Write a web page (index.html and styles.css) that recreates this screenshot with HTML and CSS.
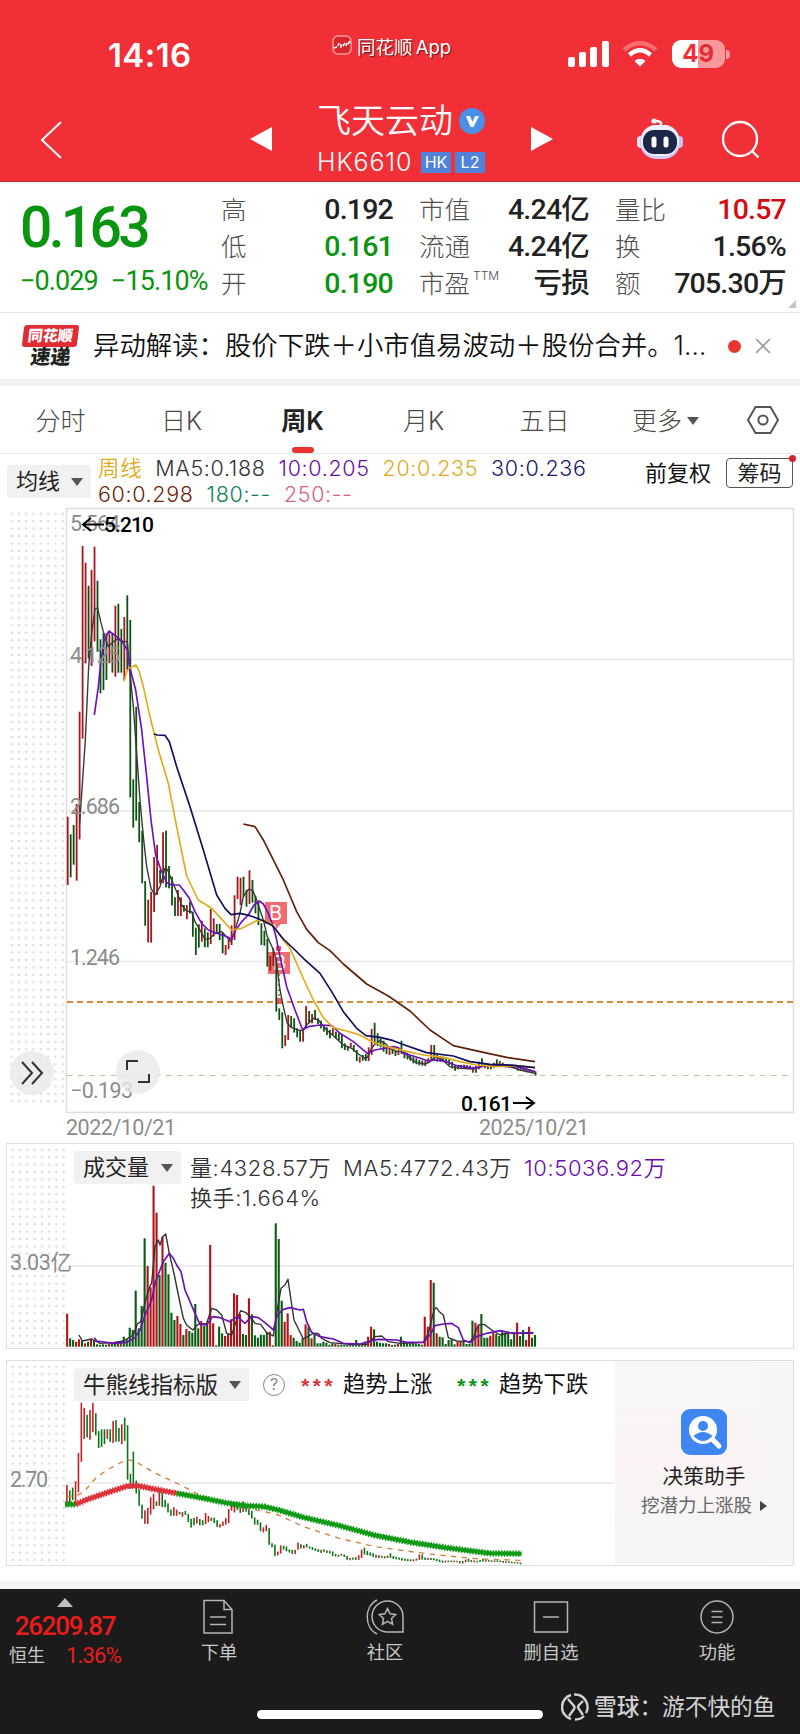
FILE: index.html
```html
<!DOCTYPE html>
<html lang="zh-CN">
<head>
    <meta charset="UTF-8">
    <meta name="viewport" content="width=device-width, initial-scale=1.0">
    <title>飞天云动 HK6610</title>
    <link rel="stylesheet" href="styles.css">
</head>
<body>
    <header class="top">
        <div class="status">
            <div class="time">14:16</div>
            <div class="app-name">
                <svg width="20" height="20" viewBox="0 0 20 20"><rect x="1" y="1" width="18" height="18" rx="5" fill="#d9262c" stroke="#f7989b" stroke-width="1.6"/><path d="M2 13l3-1M6 11l1-3M9 9v4M11 11l2-3M14 11l1-3M16 9l2-3" stroke="#fff" stroke-width="1.6" fill="none"/></svg>
                <span>同花顺 App</span>
            </div>
            <div class="signals">
                <svg width="42" height="28" viewBox="0 0 42 28" fill="#fff"><rect x="0" y="17" width="7" height="10" rx="2"/><rect x="11" y="12" width="7" height="15" rx="2"/><rect x="22" y="7" width="7" height="20" rx="2"/><rect x="34" y="1" width="7" height="26" rx="2"/></svg>
                <svg class="wifi" width="36" height="28" viewBox="0 0 36 28" fill="none" stroke="#fff" stroke-width="4.5"><path d="M2 10Q18-4 34 10" opacity=".3"/><path d="M7.500 15Q18 5.500 28.500 15"/><path d="M18 26.500L12.500 21Q18 16.500 23.500 21Z" fill="#fff" stroke="none"/></svg>
                <div class="battery"><span>4</span><span class="dim">9</span></div>
            </div>
        </div>
        <div class="titlebar">
            <svg class="back" width="24" height="40" viewBox="0 0 24 40" fill="none" stroke="#fff" stroke-width="2"><path d="M22 2L3 20l19 18"/></svg>
            <svg class="prev" width="22" height="24" viewBox="0 0 22 24" fill="#fff"><path d="M22 0v24L0 12z"/></svg>
            <div class="stock">
                <div class="stock-name">飞天云动<svg width="26" height="26" viewBox="0 0 26 26"><circle cx="13" cy="13" r="13" fill="#4a8fe8"/><path d="M7 8h4l2.500 6L16 8h4l-5.500 11h-3z" fill="#fff"/></svg></div>
                <div class="stock-code"><span>HK6610</span><b>HK</b><b>L2</b></div>
            </div>
            <svg class="next" width="22" height="24" viewBox="0 0 22 24" fill="#fff"><path d="M0 0v24l22-12z"/></svg>
            <svg class="robot" width="46" height="42" viewBox="0 0 46 42"><path d="M24 8V5q-1-2-5-2" stroke="#fff" stroke-width="2.500" fill="none"/><circle cx="17" cy="3" r="2.600" fill="#fff"/><rect x="0" y="18" width="8" height="12" rx="4" fill="#e4e2fb"/><rect x="38" y="18" width="8" height="12" rx="4" fill="#c4c2f8"/><rect x="3" y="7" width="40" height="34" rx="16.500" fill="#d0cdfa"/><rect x="4" y="7" width="38" height="31" rx="15" fill="#efeefe"/><rect x="6" y="12" width="34" height="24" rx="11" fill="#1c2748"/><rect x="14.500" y="18.500" width="5" height="11" rx="2.500" fill="#fff"/><rect x="26.500" y="18.500" width="5" height="11" rx="2.500" fill="#fff"/></svg>
            <svg class="search" width="40" height="40" viewBox="0 0 40 40" fill="none" stroke="#fff" stroke-width="2.300"><circle cx="19" cy="19" r="17"/><path d="M31 31l6.500 6.500"/></svg>
        </div>
    </header>

    <section class="quote">
        <div class="price">
            <div class="last">0.163</div>
            <div class="change"><span>−0.029</span><span>−15.10%</span></div>
        </div>
        <dl class="facts">
            <div><dt>高</dt><dd>0.192</dd></div>
            <div><dt>低</dt><dd class="down">0.161</dd></div>
            <div><dt>开</dt><dd class="down">0.190</dd></div>
        </dl>
        <dl class="facts">
            <div><dt>市值</dt><dd>4.24<i>亿</i></dd></div>
            <div><dt>流通</dt><dd>4.24<i>亿</i></dd></div>
            <div><dt>市盈<sup>TTM</sup></dt><dd><i>亏损</i></dd></div>
        </dl>
        <dl class="facts">
            <div><dt>量比</dt><dd class="up">10.57</dd></div>
            <div><dt>换</dt><dd>1.56%</dd></div>
            <div><dt>额</dt><dd>705.30<i>万</i></dd></div>
        </dl>
    </section>

    <section class="news">
        <div class="news-logo"><span>同花顺</span><em>速递</em></div>
        <p>异动解读：股价下跌＋小市值易波动＋股份合并。1…</p>
        <i class="dot"></i>
        <svg width="16" height="16" viewBox="0 0 16 16" stroke="#999" stroke-width="1.600"><path d="M1 1l14 14M15 1L1 15"/></svg>
    </section>

    <nav class="tabs">
        <a>分时</a>
        <a>日K</a>
        <a class="active">周K</a>
        <a>月K</a>
        <a>五日</a>
        <a>更多<i class="caret"></i></a>
        <svg width="32" height="30" viewBox="0 0 32 30" fill="none" stroke="#555" stroke-width="2"><path d="M8.500 2h15L31 15l-7.500 13h-15L1 15z"/><circle cx="16" cy="15" r="4.600"/></svg>
    </nav>

    <section class="averages">
        <button class="pill">均线<i class="caret"></i></button>
        <div class="legend">
            <div><span class="ma20">周线</span><span class="ma5">MA5:0.188</span><span class="ma10">10:0.205</span><span class="ma20">20:0.235</span><span class="ma30">30:0.236</span></div>
            <div><span class="ma60">60:0.298</span><span class="ma180">180:--</span><span class="ma250">250:--</span></div>
        </div>
        <span class="adjust">前复权</span>
        <button class="chips">筹码</button>
    </section>

    <section class="kline">
        <div class="dots"></div>
        <svg class="plot" width="800" height="640" viewBox="0 504 800 640">
            <rect x="66.500" y="508.500" width="727" height="604" class="frame"/>
            <path class="grid" d="M67 659.500H793M67 811H793M67 961.500H793"/>
            <path d="M67 1002H793" stroke="#d88c35" stroke-width="1.800" stroke-dasharray="6 4"/>
            <path d="M67 1075.500H793" stroke="#c4bfa6" stroke-width="1.200" stroke-dasharray="5.500 5.500"/>
            <path d="M265 902h22v22h-6l-5 5-1-5h-10zM268 952h22v22h-22z" fill="#f16c70"/>
            <g class="mark"><text x="269" y="920">B</text><text x="273" y="970">B</text></g>
            <path d="M279 974v26" stroke="#f16c70" stroke-width="2" stroke-dasharray="2 3"/>
            <path d="M276 998h6v6h-6zM276 946h5v5h-5z" fill="#f05a50"/>
            <g id="candles"></g>
            <g id="averages" transform="translate(50 500) scale(.33333)"></g>
            <g class="axis">
                <text x="70" y="531" textLength="50">5.564</text>
                <text x="70" y="663" textLength="50">4.125</text>
                <text x="70" y="814" textLength="50">2.686</text>
                <text x="70" y="965" textLength="50">1.246</text>
                <text x="70" y="1098" textLength="63">−0.193</text>
                <text x="66" y="1135" textLength="110">2022/10/21</text>
                <text x="479" y="1135" textLength="110">2025/10/21</text>
            </g>
            <g class="extreme">
                <path d="M104 524.500H83M91 518l-8 6.500 8 6.500M513 1103h20M526 1097l8 6-8 6"/>
                <text x="104" y="532" textLength="50">5.210</text>
                <text x="461" y="1110.500" textLength="51">0.161</text>
            </g>
        </svg>
        <div class="round open"><svg width="24" height="24" viewBox="0 0 24 24"><path d="M2 1l10 11L2 23M12 1l10 11-10 11"/></svg></div>
        <div class="round full"><svg width="24" height="24" viewBox="0 0 24 24"><path d="M1 10V1h11M23 14v8H12"/></svg></div>
    </section>

    <section class="panel volume">
        <div class="dots"></div>
        <svg class="plot" width="787" height="205" viewBox="7 1144 787 205">
            <path class="grid" d="M67 1266H793"/>
            <g class="axis"><text x="10" y="1270" textLength="62">3.03亿</text></g>
            <g id="volumes"></g>
            <g id="volumeAverages" transform="translate(0 1040) scale(.33333)"></g>
        </svg>
        <div class="panel-head">
            <button class="pill">成交量<i class="caret"></i></button>
            <div class="values">
                <div><span>量:4328.57万</span><span>MA5:4772.43万</span><span class="ma10">10:5036.92万</span></div>
                <div><span>换手:1.664%</span></div>
            </div>
        </div>
    </section>

    <section class="panel trend">
        <div class="dots"></div>
        <svg class="plot" width="787" height="205" viewBox="7 1361 787 205">
            <path class="grid" d="M67 1483H614"/>
            <g class="axis"><text x="10" y="1487" textLength="38">2.70</text></g>
            <g id="trendCandles"></g>
            <g id="trendLines" transform="translate(0 1350) scale(.35714 .33333)"></g>
        </svg>
        <div class="panel-head">
            <button class="pill">牛熊线指标版<i class="caret"></i></button>
            <span class="help">?</span>
            <span class="stars rise">***</span><span class="name">趋势上涨</span>
            <span class="stars fall">***</span><span class="name">趋势下跌</span>
        </div>
        <aside class="helper">
            <svg width="46" height="46" viewBox="0 0 46 46"><rect width="46" height="46" rx="9" fill="#3e86f2"/><circle cx="22" cy="21" r="14" fill="#fff"/><path d="M32 31l6 6" stroke="#fff" stroke-width="5" stroke-linecap="round"/><circle cx="22" cy="17" r="5" fill="#3e86f2"/><path d="M12.500 27q9.500-8 19 0-9.500 10-19 0z" fill="#3e86f2"/></svg>
            <strong>决策助手</strong>
            <span>挖潜力上涨股<i></i></span>
        </aside>
    </section>

    <footer class="bottom">
        <div class="bottom-row">
            <div class="index">
                <i class="arrow-up"></i>
                <b>26209.87</b>
                <div><span>恒生</span><em>1.36%</em></div>
            </div>
            <a><svg width="36" height="36" viewBox="0 0 36 36"><path d="M3 1.500h20l8 9V34H3zM23 1.500v9h8M9 18h16M9 25.500h16"/></svg>下单</a>
            <a><svg width="40" height="36" viewBox="0 0 40 36"><path d="M12 1C-1 7-1 29 12 35M38 33V17.500A15.500 15.500 0 1 0 22.500 33zM22.500 9.500l2.500 5.300 5.700.7-4.200 4 1.100 5.700-5.100-2.800-5.100 2.800 1.100-5.700-4.200-4 5.700-.7z"/></svg>社区</a>
            <a><svg width="36" height="36" viewBox="0 0 36 36"><path d="M1.500 3h33v30h-33zM10 18h16"/></svg>删自选</a>
            <a><svg width="36" height="36" viewBox="0 0 36 36"><circle cx="18" cy="18" r="16"/><path d="M12.500 12.500h11M12.500 18h11M12.500 23.500h11"/></svg>功能</a>
        </div>
        <div class="home-bar"></div>
        <div class="watermark">
            <svg width="28" height="28" viewBox="0 0 28 28" fill="none" stroke="#d2d2d2" stroke-width="2.400"><path d="M10 2A12.500 12.500 0 0 0 10 26M13 1.600A12.500 12.500 0 0 1 25 20M23 23A12.500 12.500 0 0 1 14 26.500M7 6l6 7q1 1.500 0 3l-5 7M22 8l-4 4q-2 2 0 4l4 6"/></svg>
            <span><b>雪球</b>：游不快的鱼</span>
        </div>
    </footer>

    <script src="chart.js"></script>
</body>
</html>
```

FILE: styles.css
```css
* {
    box-sizing: border-box;
}

body {
    margin: 0;
    width: 800px;
    height: 1734px;
    overflow: hidden;
    background-color: #fff;
    color: #222;
    font-family: Inter, "Noto Sans CJK SC", sans-serif;
}

svg {
    display: block;
    flex: none;
}

button {
    border: 0;
    padding: 0;
    font: inherit;
    color: inherit;
}

i, em {
    font-style: normal;
}

.caret {
    display: inline-block;
    border: 6px solid transparent;
    border-top: 8px solid #555;
    border-bottom: 0;
}

/* header */

.top {
    height: 182px;
    background-color: #f03036;
    border-bottom: 1px solid #b8292e;
    color: #fff;
}

.status {
    display: flex;
    height: 108px;
    padding-left: 108px;
}

.time {
    width: 224px;
    margin-top: 35px;
    font-size: 33px;
    line-height: 40px;
    font-weight: 600;
    letter-spacing: 0.4px;
}

.app-name {
    display: flex;
    gap: 5px;
    width: 224px;
    margin-top: 35px;
    height: 24px;
    font-size: 18.5px;
    line-height: 24px;
    word-spacing: -2px;
    text-shadow: 1px 1px 1px rgba(0, 0, 0, 0.6);
}

.signals {
    display: flex;
    margin-top: 40px;
    margin-left: 12px;
}

.wifi {
    margin-left: 12px;
}

.battery {
    position: relative;
    display: flex;
    width: 53px;
    height: 28px;
    margin-left: 14px;
    border-radius: 9px;
    background: linear-gradient(to right, #fff 50%, #f7989b 50%);
    color: #f03036;
    font-size: 24px;
    line-height: 28px;
    font-weight: 700;
}

.battery span {
    width: 50%;
    text-align: right;
}

.battery .dim {
    text-align: left;
    color: #e32c33;
}

.battery::after {
    content: "";
    position: absolute;
    right: -5px;
    top: 10px;
    width: 4px;
    height: 9px;
    border-radius: 0 4px 4px 0;
    background-color: #f7989b;
}

.titlebar {
    display: flex;
    height: 73px;
}

.back {
    margin: 12px 0 0 39px;
}

.prev {
    margin: 19px 0 0 187px;
}

.stock {
    width: 214px;
    margin-left: 45px;
    margin-top: -8px;
}

.stock-name {
    display: flex;
    align-items: center;
    gap: 6px;
    height: 42px;
    font-size: 34px;
    line-height: 42px;
    font-weight: 350;
    white-space: nowrap;
}

.stock-code {
    display: flex;
    align-items: center;
    height: 34px;
    margin-top: 3px;
    font-size: 25px;
    line-height: 34px;
    font-weight: 300;
    gap: 4px;
}

.stock-code span {
    width: 100px;
    letter-spacing: 0.9px;
}

.stock-code b {
    width: 30px;
    height: 21px;
    background-color: #4f82d8;
    font-size: 16px;
    line-height: 21px;
    font-weight: 400;
    text-align: center;
}

.next {
    margin-top: 19px;
}

.robot {
    margin: 10px 0 0 84px;
}

.search {
    margin: 12px 0 0 38px;
}

/* quote */

.quote {
    position: relative;
    display: grid;
    grid-template-columns: 175px 171px 169px 170px;
    column-gap: 27px;
    height: 131px;
    padding-left: 20px;
    border-bottom: 1px solid #e9e9e9;
}

.quote::after {
    content: "";
    position: absolute;
    right: 4px;
    bottom: 4px;
    border: 4.5px solid #c4c4c4;
    border-top-color: transparent;
    border-left-color: transparent;
}

.price {
    color: #0a940f;
    font-family: Roboto, sans-serif;
    font-weight: 500;
}

.last {
    margin-top: 14px;
    height: 64px;
    font-size: 57px;
    line-height: 64px;
    letter-spacing: -3.7px;
}

.change {
    display: flex;
    gap: 13px;
    margin-top: 6px;
    font-size: 27px;
    line-height: 30px;
    font-weight: 400;
    letter-spacing: -0.9px;
    white-space: nowrap;
}

.facts {
    margin: 9px 0 0 -1px;
}

.facts div {
    display: flex;
    justify-content: space-between;
    height: 37px;
    line-height: 37px;
}

.facts dt {
    font-size: 25.5px;
    font-weight: 300;
    color: #4f4f4f;
    white-space: nowrap;
}

.facts dd {
    margin: 0;
    font-family: Roboto, "Noto Sans CJK SC", sans-serif;
    font-size: 28.5px;
    font-weight: 500;
    letter-spacing: -0.8px;
    white-space: nowrap;
}

.facts sup {
    margin-left: 3px;
    font-size: 12px;
    line-height: 10px;
    vertical-align: 13px;
}

.facts .down {
    color: #0a940f;
}

.facts .up {
    color: #d50b12;
}

/* news */

.news {
    display: flex;
    align-items: center;
    height: 66px;
    padding-left: 23px;
}

.news-logo {
    width: 55px;
    text-align: center;
    font-weight: 900;
}

.news-logo span {
    display: block;
    height: 22px;
    border-radius: 3px;
    background-color: #e02d33;
    color: #fff;
    font-size: 15px;
    line-height: 22px;
    transform: skewX(-7deg);
}

.news-logo em {
    display: block;
    height: 21px;
    font-size: 20px;
    line-height: 21px;
    transform: skewX(-7deg);
}

.news p {
    width: 635px;
    margin: -5px 0 0 15px;
    font-size: 26.4px;
    font-weight: 350;
    color: #111;
    white-space: nowrap;
}

.dot {
    width: 13px;
    height: 13px;
    margin-right: 14px;
    border-radius: 50%;
    background-color: #e8352f;
}

/* tabs */

.tabs {
    display: grid;
    grid-template-columns: repeat(6, 121px) 74px;
    align-items: center;
    justify-items: center;
    height: 75px;
    border-top: 7px solid #f2f2f2;
    border-bottom: 1px solid #e5e5e5;
    font-size: 25px;
    font-weight: 300;
    color: #4a4a4a;
}

.tabs a {
    position: relative;
    height: 67px;
    line-height: 70px;
    white-space: nowrap;
}

.tabs .caret {
    margin: 0 0 5px 5px;
}

.tabs .active {
    color: #222;
    font-weight: 600;
}

.tabs .active::after {
    content: "";
    position: absolute;
    left: 50%;
    bottom: 0;
    width: 22px;
    height: 6px;
    margin-left: -11px;
    border-radius: 3px;
    background-color: #e8332f;
}

/* moving averages */

.averages {
    display: flex;
    height: 50px;
    padding-left: 7px;
    font-size: 22px;
}

.pill {
    display: flex;
    align-items: center;
    justify-content: space-between;
    flex: none;
    height: 33px;
    padding: 0 8px 0 9px;
    border-radius: 3px;
    background-color: #f1f1f1;
    font-size: 22px;
    line-height: 33px;
}

.averages .pill {
    width: 84px;
    margin-top: 11px;
}

.legend {
    width: 547px;
    margin-left: 7px;
    font-size: 21.5px;
    line-height: 26px;
    font-weight: 350;
    letter-spacing: 0.65px;
    padding-top: 1px;
}

.legend div {
    display: flex;
    gap: 13px;
}

.ma5 { color: #333; }
.ma10 { color: #6a0dad; }
.ma20 { color: #e0aa1c; }
.ma30 { color: #14146b; }
.ma60 { color: #6a2408; }
.ma180 { color: #0e7f5c; }
.ma250 { color: #d8607e; }

.adjust {
    width: 81px;
    line-height: 38px;
    color: #111;
}

.chips {
    position: relative;
    width: 67px;
    height: 30px;
    margin-top: 4px;
    border: 1px solid #555;
    border-radius: 4px;
    background-color: #fff;
    line-height: 28px;
}

.chips::after {
    content: "";
    position: absolute;
    right: -4px;
    top: -4px;
    width: 7px;
    height: 7px;
    border-radius: 50%;
    background-color: #d8202a;
}

/* charts */

.dots {
    position: absolute;
    background-image: radial-gradient(circle, #dedede 1.1px, transparent 1.6px);
    background-size: 7.3px 7.45px;
}

.kline {
    position: relative;
    height: 640px;
}

.kline .dots {
    left: 8px;
    top: 6px;
    width: 58px;
    height: 597px;
}

.plot {
    position: relative;
}

.frame {
    fill: none;
    stroke: #dedede;
    stroke-width: 1.5;
}

.grid {
    stroke: #e8e8e8;
    stroke-width: 1.4;
}

.axis {
    font: 21.5px Roboto, "Noto Sans CJK SC", sans-serif;
    fill: #8c8c8c;
}

.mark {
    font: 20px Inter, sans-serif;
    fill: #fff;
}

.extreme {
    font: 500 21px Roboto, sans-serif;
    fill: #000;
}

.extreme path {
    fill: none;
    stroke: #000;
    stroke-width: 2;
}

.round {
    position: absolute;
    display: flex;
    align-items: center;
    justify-content: center;
    width: 44px;
    height: 44px;
    border-radius: 50%;
    background-color: rgba(232, 232, 232, 0.8);
}

.round path {
    fill: none;
    stroke: #333;
    stroke-width: 2;
}

.open {
    left: 10px;
    top: 547px;
}

.full {
    left: 116px;
    top: 546px;
}

.panel {
    position: relative;
    width: 788px;
    height: 206px;
    margin-left: 6px;
    border: 1px solid #dfdfdf;
}

.panel .plot {
    position: absolute;
    left: 0;
    top: 0;
}

.panel .dots {
    left: 2px;
    top: 2px;
    width: 58px;
    height: 200px;
}

.volume {
    margin-top: -1px;
}

.trend {
    margin-top: 11px;
}

.panel-head {
    position: relative;
    display: flex;
    align-items: flex-start;
    padding: 7px 0 0 67px;
}

.volume .pill {
    width: 107px;
}

.values {
    margin-left: 9px;
    padding-top: 2px;
    font-size: 22px;
    line-height: 30px;
    font-weight: 350;
    letter-spacing: 0.6px;
    color: #333;
}

.values div {
    display: flex;
    gap: 12px;
}

.values .ma10 {
    color: #6a0dad;
}

.trend .pill {
    width: 175px;
    font-size: 22.5px;
}

.help {
    width: 22px;
    height: 22px;
    margin: 6px 14px 0 14px;
    border: 1.5px solid #888;
    border-radius: 50%;
    color: #888;
    font-size: 16px;
    line-height: 19px;
    text-align: center;
}

.stars {
    width: 44px;
    font: 700 21px/41px "Liberation Mono", monospace;
    letter-spacing: -1px;
}

.rise {
    color: #d8343a;
}

.fall {
    color: #0a940f;
}

.name {
    width: 112px;
    color: #111;
    font-size: 22.3px;
    line-height: 31px;
}

.helper {
    position: absolute;
    right: 0;
    top: 0;
    display: flex;
    flex-direction: column;
    align-items: center;
    width: 178px;
    height: 203px;
    padding-top: 48px;
    background: linear-gradient(to left, #f6f6f6, transparent 35%), linear-gradient(#f8f8f8, #fbf3f4 50%, #f5f5f5 90%);
}

.helper strong {
    margin-top: 7px;
    color: #222;
    font-size: 20.7px;
    line-height: 30px;
    font-weight: 400;
}

.helper span {
    display: flex;
    align-items: center;
    color: #666;
    font-size: 18.5px;
    line-height: 27px;
}

.helper i {
    margin-left: 8px;
    border: 5px solid transparent;
    border-left: 7px solid #444;
    border-right: 0;
}

/* bottom bar */

.bottom {
    position: relative;
    height: 154px;
    margin-top: 15px;
    border-top: 8px solid #f4f4f4;
    background-color: #1b1b1b;
}

.bottom-row {
    display: grid;
    grid-template-columns: 136px repeat(4, 166px);
    width: 800px;
    height: 110px;
}

.bottom a {
    display: flex;
    flex-direction: column;
    align-items: center;
    gap: 4px;
    padding-top: 10px;
    color: #c8c8c8;
    font-size: 18.3px;
    line-height: 27px;
}

.bottom a svg {
    fill: none;
    stroke: #b5b5b5;
    stroke-width: 1.5;
}

.index {
    width: 130px;
    padding-top: 9px;
    text-align: center;
    color: #ea1c1c;
    font-family: Roboto, "Noto Sans CJK SC", sans-serif;
}

.arrow-up {
    display: block;
    width: 0;
    margin: 0 auto;
    border: 8px solid transparent;
    border-top: 0;
    border-bottom: 9px solid #c0c0c0;
}

.index b {
    display: block;
    margin-top: 5px;
    font-size: 26px;
    line-height: 28px;
    font-weight: 500;
    letter-spacing: -1.3px;
}

.index div {
    display: flex;
    justify-content: space-between;
    padding: 1px 9px 0;
    line-height: 30px;
    font-size: 18px;
}

.index span {
    color: #c8c8c8;
}

.index em {
    font-size: 22px;
    letter-spacing: -0.8px;
}

.home-bar {
    width: 286px;
    height: 9px;
    margin: 11px 0 0 257px;
    border-radius: 5px;
    background-color: #fff;
}

.watermark {
    position: absolute;
    left: 561px;
    top: 104px;
    display: flex;
    align-items: center;
    gap: 5px;
    color: #d2d2d2;
    font-size: 22.7px;
    line-height: 28px;
    white-space: nowrap;
}

.watermark b {
    font-weight: 500;
}
```

FILE: chart.js
```js
// weekly bars: high, low (thirds of a pixel below the top), r = up, g = down
const weeks = `950 1155 r,1003 1132 g,975 1094 g,912 1142 r,635 1018 r,138 716 r,188 490 r,257 475 g,210 498 r,140 424 r,
242 455 g,418 580 g,400 570 g,400 540 g,400 490 r,400 518 g,317 530 r,311 518 g,387 518 g,351 540 r,
286 510 g,360 892 g,838 983 g,620 962 g,906 1027 g,992 1150 g,1143 1277 g,1199 1327 r,1175 1328 r,1071 1236 r,
1035 1185 r,1110 1150 g,997 1150 r,992 1162 g,1098 1165 g,1130 1216 g,1192 1248 g,1170 1248 r,1192 1248 r,1215 1235 g,
1215 1258 r,1205 1240 g,1235 1310 g,1283 1365 g,1273 1343 g,1262 1325 r,1285 1342 g,1297 1342 g,1227 1332 r,1255 1310 r,
1272 1300 g,1272 1320 g,1297 1360 g,1335 1365 r,1310 1348 r,1276 1335 r,1186 1320 r,1130 1197 r,1133 1215 r,1130 1190 g,
1170 1220 g,1111 1212 r,1140 1208 g,1187 1240 g,1205 1275 g,1270 1335 g,1292 1337 g,1317 1400 g,1368 1412 r,1345 1398 r,
1375 1535 g,1525 1560 g,1537 1645 g,1605 1638 r,1545 1620 r,1548 1583 g,1555 1598 g,1585 1612 g,1590 1625 g,1590 1625 r,
1518 1583 r,1533 1570 g,1542 1570 r,1530 1560 g,1555 1572 g,1562 1585 g,1575 1595 g,1582 1605 g,1590 1615 g,1585 1605 r,
1595 1615 g,1600 1622 g,1605 1645 g,1630 1650 g,1638 1652 g,1628 1642 r,1635 1655 g,1650 1683 g,1670 1688 r,1665 1682 g,
1662 1683 g,1642 1683 r,1587 1665 r,1568 1630 g,1600 1638 g,1615 1642 g,1622 1655 g,1638 1662 g,1642 1665 r,1648 1662 g,
1652 1668 g,1645 1665 r,1622 1662 g,1650 1675 g,1658 1678 g,1665 1682 g,1670 1690 g,1675 1693 g,1680 1696 g,1682 1697 g,
1682 1698 r,1675 1690 g,1635 1683 r,1635 1680 g,1665 1685 g,1668 1685 r,1670 1685 g,1672 1688 g,1678 1695 g,1685 1705 g,
1695 1712 g,1695 1708 r,1695 1706 g,1694 1706 g,1695 1706 r,1697 1706 g,1700 1718 r,1698 1718 g,1685 1708 r,1675 1702 g,
1690 1705 g,1693 1708 r,1697 1708 g,1688 1703 g,1678 1700 g,1683 1700 r,1688 1700 g,1692 1703 g,1692 1704 r,1693 1705 g,
1694 1706 g,1698 1712 g,1700 1712 r,1702 1714 g,1705 1717 g,1708 1718 g,1710 1720 r,1714 1727 g`.split(",").map(w => w.trim().split(" "));

// turnover bar tops in the same thirds of a pixel, 920 is the base line
const volumes = [821, 895, 900, 905, 898, 903, 910, 905, 898, 900, 913, 914, 913, 914, 912, 910, 908, 903, 905, 890,
    898, 863, 870, 752, 865, 798, 595, 678, 742, 437, 518, 705, 590, 668, 703, 818, 840, 828, 852, 885,
    867, 873, 878, 792, 865, 843, 858, 852, 615, 850, 916, 860, 880, 888, 883, 838, 760, 765, 822, 882,
    885, 775, 823, 886, 893, 884, 885, 878, 875, 916, 550, 597, 782, 845, 820, 885, 893, 903, 908, 895,
    853, 860, 895, 880, 910, 910, 905, 908, 914, 910, 912, 914, 914, 915, 915, 914, 914, 900, 912, 914,
    905, 890, 860, 868, 905, 908, 910, 910, 912, 915, 914, 912, 890, 905, 908, 910, 906, 910, 912, 914,
    830, 860, 720, 728, 880, 890, 892, 912, 900, 898, 913, 905, 905, 905, 912, 912, 842, 848, 858, 822,
    893, 893, 887, 878, 882, 888, 875, 878, 880, 898, 877, 848, 888, 870, 900, 860, 893, 885];
// weeks whose turnover bar is red
const redVolumes = [0, 3, 4, 6, 8, 14, 18, 27, 28, 29, 30, 32, 37, 38, 40, 45, 48, 49, 53, 54, 55, 56, 57, 58, 61, 68, 69, 73, 74, 75,
    80, 82, 90, 101, 102, 108, 111, 120, 121, 122, 124, 131, 132, 137, 138, 142, 143, 151, 154, 155];

const colors = { r: "#a3181c", g: "#0b5211" };
const trendColors = { r: "#bd2127", g: "#0d7416" };

function bar(x, top, bottom, color, width) {
    return `<rect x="${x.toFixed(2)}" y="${top.toFixed(1)}" width="${width}" height="${(bottom - top).toFixed(1)}" fill="${color}"/>`;
}

function line(points, color, width, extra = "") {
    return `<polyline points="${points}" fill="none" stroke="${color}" stroke-width="${width}" stroke-linejoin="round" ${extra}/>`;
}

function fill(id, markup) {
    document.getElementById(id).innerHTML = markup;
}

fill("candles", weeks.map(([h, l, c], i) => bar(66.8 + i * 2.98, 500 + h / 3, 500 + l / 3, colors[c], 1.8)).join(""));
fill("volumes", volumes.map((v, i) => bar(66.1 + i * 2.98, 1040 + v / 3, 1346.7, redVolumes.includes(i) ? "#b01418" : "#0c5a13", 2.1)).join(""));
fill("trendCandles", weeks.map(([h, l, c], i) => bar(66.1 + i * 2.889, 1402.7 + (h - 138) * 0.1014, 1403.2 + (l - 138) * 0.1014, trendColors[c], 1.6)).join(""));

fill("averages",
    line("89,970 106,720 116,500 125,400 135,325 143,325 152,365 160,395 175,440 190,425 205,415 220,425 232,425 240,520 250,620 260,760 270,900 280,1010 290,1100 303,1165 315,1185 330,1160 345,1105 352,1108 365,1140 380,1175 395,1215 410,1233 425,1235 435,1265 450,1290 465,1318 480,1315 495,1300 515,1295 530,1310 543,1325 555,1290 570,1240 580,1190 595,1168 608,1170 620,1200 640,1260 652,1310 668,1345 678,1375 690,1470 700,1520 712,1570 725,1583 745,1590 757,1592 770,1575 790,1555 805,1560 830,1590 850,1607 880,1635 905,1645 925,1662 945,1675 952,1672 965,1645 975,1632 990,1622 1005,1630 1020,1645 1040,1655 1060,1652 1080,1675 1100,1688 1125,1692 1140,1685 1155,1670 1175,1678 1200,1700 1230,1705 1270,1707 1300,1698 1340,1693 1380,1700 1410,1710 1455,1720", "#3a3a3a", 4.2) +
    line("133,645 145,560 152,490 163,420 177,393 200,410 220,430 232,450 240,505 257,570 275,690 290,830 303,960 317,1065 333,1110 350,1148 365,1155 388,1155 400,1170 418,1195 435,1235 455,1270 475,1290 500,1300 525,1308 545,1318 557,1290 575,1265 595,1245 612,1215 628,1203 640,1212 655,1240 668,1275 678,1310 690,1370 710,1460 735,1530 758,1590 775,1580 810,1575 845,1577 870,1600 910,1625 952,1660 975,1650 1030,1640 1045,1643 1060,1660 1090,1668 1135,1683 1160,1680 1190,1685 1220,1697 1270,1705 1300,1698 1340,1695 1400,1700 1455,1715", "#6f12bd", 5) +
    line("222,545 228,520 237,505 258,495 268,515 280,560 300,650 325,750 355,850 380,980 410,1128 445,1200 485,1225 510,1252 545,1290 575,1285 620,1262 650,1262 668,1275 700,1320 720,1345 740,1390 762,1440 790,1500 820,1553 850,1583 890,1593 930,1605 960,1622 1000,1637 1060,1652 1120,1665 1180,1672 1230,1685 1280,1695 1340,1700 1400,1697 1455,1703", "#e3ab1a", 5) +
    line("312,702 322,705 345,706 358,725 380,800 420,920 460,1050 500,1185 525,1225 543,1244 570,1240 600,1247 640,1262 668,1277 700,1317 735,1350 765,1380 810,1420 845,1475 880,1535 920,1585 948,1607 990,1612 1030,1622 1070,1637 1130,1658 1210,1668 1260,1685 1320,1693 1390,1696 1455,1703", "#0f0f60", 5) +
    line("580,972 615,980 640,1020 700,1140 740,1235 770,1288 805,1328 840,1352 880,1392 950,1452 1015,1488 1080,1533 1140,1590 1210,1637 1290,1655 1370,1672 1455,1685", "#622008", 5));

fill("volumeAverages",
    line("237,885 247,903 275,897 300,910 340,908 370,903 400,885 412,852 422,845 437,780 450,738 455,730 465,620 475,600 480,615 488,590 497,582 508,640 523,705 535,765 550,835 560,855 578,870 595,853 620,850 635,805 650,810 665,825 680,880 695,885 710,840 722,812 738,818 755,835 765,850 782,853 800,878 820,888 830,820 843,745 855,735 864,718 873,780 882,840 910,897 940,880 955,880 965,895 990,908 1050,913 1100,913 1125,890 1145,888 1165,905 1200,910 1270,907 1285,880 1297,830 1303,808 1309,803 1318,815 1330,825 1345,893 1370,903 1410,905 1420,893 1435,855 1453,853 1475,870 1500,885 1530,878 1560,880 1600,880", "#333", 4.2) +
    line("283,893 290,903 340,910 380,907 405,893 420,870 437,820 455,780 465,730 480,690 490,665 508,640 520,655 530,675 543,695 555,750 570,785 585,820 600,853 620,855 637,830 660,833 690,845 712,830 735,850 755,830 775,833 795,848 820,870 832,825 850,808 870,803 880,805 900,810 910,808 920,845 935,877 960,890 1000,897 1030,910 1080,912 1110,903 1135,898 1190,900 1220,907 1270,907 1290,885 1305,857 1330,852 1355,850 1375,863 1390,900 1410,908 1430,890 1460,880 1500,872 1540,880 1600,878", "#6a12b0", 5));

// the bull/bear line is a solid core with a serrated edge
const band = (points, color) => line(points, color, 12) + line(points, color, 19, 'stroke-dasharray="4 4"');

fill("trendLines",
    line("187,440 215,437 235,425 270,382 300,360 355,328 380,335 430,367 500,402 560,435 640,460 700,475 780,495 850,530 950,565 1050,590 1200,612 1330,626 1457,631", "#cf8238", 4, 'stroke-dasharray="15 15"') +
    band("182,463 212,463", "#109a16") +
    band("212,463 240,450 300,428 360,407 390,408 430,417 495,430", "#dc343a") +
    band("495,430 570,445 640,460 690,467 740,470 780,480 850,502 950,527 1050,556 1150,577 1250,593 1370,610 1460,611", "#109a16"));
```
